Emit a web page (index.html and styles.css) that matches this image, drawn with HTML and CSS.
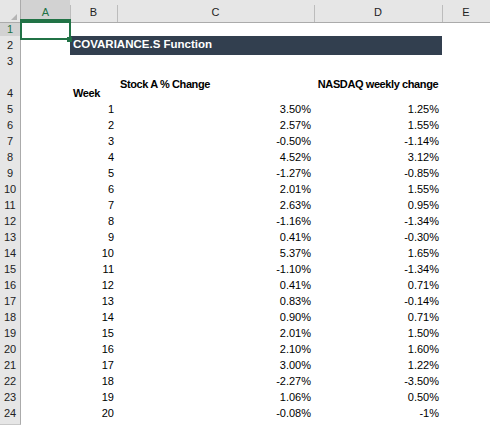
FILE: index.html
```html
<!DOCTYPE html>
<html lang="en">
<head>
    <meta charset="UTF-8">
    <title>COVARIANCE.S Function</title>
    <link rel="stylesheet" href="styles.css">
</head>
<body>
    <div class="sheet">
        <div class="row head">
            <div class="corner"></div>
            <div class="colhead sel">A</div>
            <div class="colhead">B</div>
            <div class="colhead">C</div>
            <div class="colhead">D</div>
            <div class="colhead">E</div>
        </div>

        <div class="row">
            <div class="rowhead sel">1</div>
            <div class="cell a1"></div>
            <div class="cell"></div><div class="cell"></div><div class="cell"></div><div class="cell"></div>
        </div>
        <div class="row">
            <div class="rowhead">2</div>
            <div class="cell"></div>
            <div class="cell title">COVARIANCE.S Function</div>
            <div class="cell"></div>
        </div>
        <div class="row">
            <div class="rowhead">3</div>
            <div class="cell"></div><div class="cell"></div><div class="cell"></div><div class="cell"></div><div class="cell"></div>
        </div>
        <div class="row tall">
            <div class="rowhead low">4</div>
            <div class="cell"></div>
            <div class="cell label low">Week</div>
            <div class="cell label mid">Stock A % Change</div>
            <div class="cell label mid centre">NASDAQ weekly change</div>
            <div class="cell"></div>
        </div>

        <div class="row"><div class="rowhead">5</div><div class="cell"></div><div class="cell num">1</div><div class="cell num">3.50%</div><div class="cell num">1.25%</div><div class="cell"></div></div>
        <div class="row"><div class="rowhead">6</div><div class="cell"></div><div class="cell num">2</div><div class="cell num">2.57%</div><div class="cell num">1.55%</div><div class="cell"></div></div>
        <div class="row"><div class="rowhead">7</div><div class="cell"></div><div class="cell num">3</div><div class="cell num">-0.50%</div><div class="cell num">-1.14%</div><div class="cell"></div></div>
        <div class="row"><div class="rowhead">8</div><div class="cell"></div><div class="cell num">4</div><div class="cell num">4.52%</div><div class="cell num">3.12%</div><div class="cell"></div></div>
        <div class="row"><div class="rowhead">9</div><div class="cell"></div><div class="cell num">5</div><div class="cell num">-1.27%</div><div class="cell num">-0.85%</div><div class="cell"></div></div>
        <div class="row"><div class="rowhead">10</div><div class="cell"></div><div class="cell num">6</div><div class="cell num">2.01%</div><div class="cell num">1.55%</div><div class="cell"></div></div>
        <div class="row"><div class="rowhead">11</div><div class="cell"></div><div class="cell num">7</div><div class="cell num">2.63%</div><div class="cell num">0.95%</div><div class="cell"></div></div>
        <div class="row"><div class="rowhead">12</div><div class="cell"></div><div class="cell num">8</div><div class="cell num">-1.16%</div><div class="cell num">-1.34%</div><div class="cell"></div></div>
        <div class="row"><div class="rowhead">13</div><div class="cell"></div><div class="cell num">9</div><div class="cell num">0.41%</div><div class="cell num">-0.30%</div><div class="cell"></div></div>
        <div class="row"><div class="rowhead">14</div><div class="cell"></div><div class="cell num">10</div><div class="cell num">5.37%</div><div class="cell num">1.65%</div><div class="cell"></div></div>
        <div class="row"><div class="rowhead">15</div><div class="cell"></div><div class="cell num">11</div><div class="cell num">-1.10%</div><div class="cell num">-1.34%</div><div class="cell"></div></div>
        <div class="row"><div class="rowhead">16</div><div class="cell"></div><div class="cell num">12</div><div class="cell num">0.41%</div><div class="cell num">0.71%</div><div class="cell"></div></div>
        <div class="row"><div class="rowhead">17</div><div class="cell"></div><div class="cell num">13</div><div class="cell num">0.83%</div><div class="cell num">-0.14%</div><div class="cell"></div></div>
        <div class="row"><div class="rowhead">18</div><div class="cell"></div><div class="cell num">14</div><div class="cell num">0.90%</div><div class="cell num">0.71%</div><div class="cell"></div></div>
        <div class="row"><div class="rowhead">19</div><div class="cell"></div><div class="cell num">15</div><div class="cell num">2.01%</div><div class="cell num">1.50%</div><div class="cell"></div></div>
        <div class="row"><div class="rowhead">20</div><div class="cell"></div><div class="cell num">16</div><div class="cell num">2.10%</div><div class="cell num">1.60%</div><div class="cell"></div></div>
        <div class="row"><div class="rowhead">21</div><div class="cell"></div><div class="cell num">17</div><div class="cell num">3.00%</div><div class="cell num">1.22%</div><div class="cell"></div></div>
        <div class="row"><div class="rowhead">22</div><div class="cell"></div><div class="cell num">18</div><div class="cell num">-2.27%</div><div class="cell num">-3.50%</div><div class="cell"></div></div>
        <div class="row"><div class="rowhead">23</div><div class="cell"></div><div class="cell num">19</div><div class="cell num">1.06%</div><div class="cell num">0.50%</div><div class="cell"></div></div>
        <div class="row"><div class="rowhead">24</div><div class="cell"></div><div class="cell num">20</div><div class="cell num">-0.08%</div><div class="cell num">-1%</div><div class="cell"></div></div>

        <div class="row stub"><div class="rowhead"></div></div>
    </div>
</body>
</html>
```

FILE: styles.css
```css
* {
    box-sizing: border-box;
}

body {
    margin: 0;
    background: #fff;
    font-family: "Liberation Sans", Arial, sans-serif;
    font-size: 11px;
    color: #000;
    overflow: hidden;
}

.row {
    display: grid;
    grid-template-columns: 21px 49px 47px 197px 128px 48px;
    height: 16px;
}

.row.head {
    height: 20px;
}

.row.tall {
    height: 32px;
}

.row.stub {
    height: 5px;
}

/* headers */
.corner {
    position: relative;
    background: #e6e6e6;
    border-right: 1px solid #ababab;
    border-bottom: 1px solid #ababab;
}

.corner::after {
    content: "";
    position: absolute;
    right: 3px;
    bottom: 2px;
    width: 6px;
    height: 6px;
    background: #b4b4b4;
    clip-path: polygon(100% 0, 100% 100%, 0 100%);
}

.colhead {
    position: relative;
    background: #e6e6e6;
    border-bottom: 1px solid #ababab;
    text-align: center;
    padding-top: 3px;
    line-height: 18px;
    color: #222;
}

.colhead::before {
    content: "";
    position: absolute;
    left: 0;
    top: 5px;
    bottom: 0;
    width: 1px;
    background: #bcbcbc;
}

.colhead.sel {
    background: #d2d2d2;
    border-bottom: 2px solid #217346;
    color: #217346;
}

.colhead.sel::before {
    display: none;
}

.rowhead {
    background: #e6e6e6;
    border-right: 1px solid #ababab;
    border-bottom: 1px solid #c8c8c8;
    text-align: center;
    line-height: 18px;
    color: #222;
}

.rowhead.sel {
    background: #d2d2d2;
    color: #217346;
}

/* cells */
.cell {
    line-height: 18px;
    white-space: nowrap;
}

.a1 {
    position: relative;
}

.a1::before {
    content: "";
    position: absolute;
    left: -1px;
    top: -1px;
    right: -1px;
    bottom: -1px;
    border: 2px solid #217346;
}

.a1::after {
    content: "";
    position: absolute;
    right: -2px;
    bottom: -3px;
    width: 5px;
    height: 5px;
    background: #217346;
}

.title {
    grid-column: span 3;
    background: #323f4f;
    color: #fff;
    font-weight: bold;
    font-size: 11.5px;
    line-height: 17px;
    padding-left: 3px;
}

.label {
    font-weight: bold;
    letter-spacing: -0.4px;
    padding-left: 3px;
}

.low {
    padding-top: 16px;
}

.mid {
    padding-top: 7px;
}

.centre {
    text-align: center;
    padding-left: 0;
}

.num {
    text-align: right;
    padding-right: 3px;
}
```
